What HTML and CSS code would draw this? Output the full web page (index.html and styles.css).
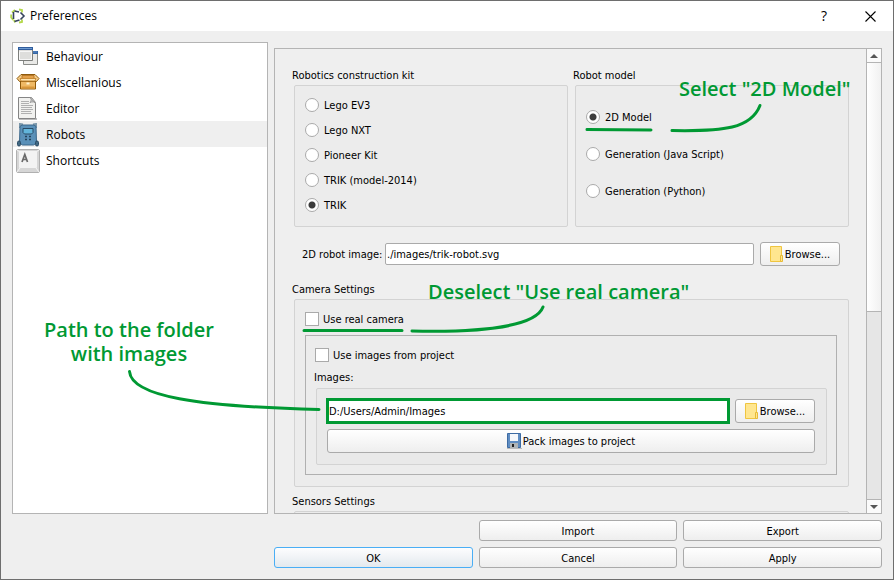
FILE: index.html
```html
<!DOCTYPE html>
<html lang="en">
<head>
<meta charset="utf-8">
<title>Preferences</title>
<link rel="stylesheet" href="styles.css">
</head>
<body>
<div class="window">
  <header class="titlebar">
    <svg class="app-icon" width="16" height="16" viewBox="0 0 16 16" fill="none">
      <path d="M2 4.500 5 2M9 1.500l3 .5v2.500M1.200 6.500v3l2 2.500M5 14.500l-1-2.500M12 11.500V14l-3 .5" stroke="#b4d84a" stroke-width="1.800"/>
      <path d="M3.500 11V4M4.500 3 9 4M10.500 4.500 14 8l-3.500 3.500M9.500 12l-5 1.500" stroke="#36435f" stroke-width="1.600"/>
    </svg>
    <h1>Preferences</h1>
    <button class="caption" aria-label="Help">?</button>
    <button class="caption" aria-label="Close"><svg width="11" height="11" viewBox="0 0 11 11" stroke="#000" stroke-width="1.100"><path d="M.5.5l10 10M10.500.5l-10 10"/></svg></button>
  </header>

  <main class="content">
    <nav class="pages">
      <button class="page">
        <svg width="24" height="24" viewBox="0 0 24 24">
          <path d="M7.500 6.500h14v13h-14z" fill="#e9e9e7" stroke="#8b8d8a"/><path d="M7 6h15v3H7z" fill="#3465a4"/><path d="M8 7h13" stroke="#5f8cc6"/>
          <path d="M2.500 3.500h14v12h-14z" fill="#dededc" stroke="#7d7f7c"/><path d="M3.500 6.500h12v8h-12z" fill="none" stroke="#f6f6f6"/><path d="M2 2h15v3H2z" fill="#2f5c9c"/><path d="M3 3.500h13" stroke="#6f9bd0"/>
        </svg>Behaviour</button>
      <button class="page">
        <svg width="24" height="24" viewBox="0 0 24 24" stroke="#8f5a0c" stroke-linejoin="round">
          <path d="M4.500 9.500h15v8.500h-15z" fill="#efb965"/><path d="M5.500 16.500h13" stroke="#d8963a" stroke-width="2"/>
          <path d="M5 3.500h14l4 4-2.500 3h-17L1 7.500z" fill="#f6ce8b"/>
          <path d="M6 4.500h12v3H6z" fill="#e3a04a" stroke="#b97b2b"/><path d="M4 7.500h16l-1 2.500H5z" fill="#ffe3ac" stroke="#c88a35"/><path d="M10.500 12.500h3" stroke="#fff3cf" stroke-width="2"/>
        </svg>Miscellanious</button>
      <button class="page">
        <svg width="24" height="24" viewBox="0 0 24 24">
          <path d="M3 22h18" stroke="#bbb" stroke-width="2"/><path d="M2.500.500h13l4 5v16h-17z" fill="#f1f1ef" stroke="#858585" stroke-linejoin="round"/>
          <path d="M14 .500c2 1 1 4 0 5 2-1 5-1 5.500 1z" fill="#ccc" stroke="#999"/>
          <path d="M5 4.500h8M5 6.500h8M5 8.500h12M5 10.500h11M5 12.500h12M5 14.500h10M5 16.500h11" stroke="#b0b0b0"/>
        </svg>Editor</button>
      <button class="page current">
        <svg width="24" height="24" viewBox="0 0 24 24" stroke="#294a65">
          <path d="M4 5V1l3 .500M20 5V1l-3 .500" fill="none" stroke="#7b97aa" stroke-width="2"/>
          <path d="M4 3.500 6 2h12l2 1.500.5 16.500-3 2h-11l-3-2z" fill="#5a90b8" stroke="#3a668a"/><path d="M7 5.500h10v4L15.500 11h-7L7 9.500z" fill="#62b4da"/>
          <path d="M9 13.500h2M13 13.500h2M9 16.500h2M13 16.500h2" stroke="#24435c" stroke-width="1.500"/>
          <rect x="1.500" y="18" width="3" height="5" rx="1.500" fill="#426983"/><rect x="19.500" y="18" width="3" height="5" rx="1.500" fill="#426983"/>
        </svg>Robots</button>
      <button class="page">
        <svg width="24" height="24" viewBox="0 0 24 24">
          <rect x=".5" y=".5" width="23" height="23" rx="1.500" fill="#d6d6d6" stroke="#b0b0b0"/><path d="M1 1l3 2M23 1l-3 2M1 23l3-4M23 23l-3-4" stroke="#f5f5f5"/><rect x="3" y="2" width="18" height="17" rx="1" fill="#f3f3f3"/>
          <path d="M6 13 8.800 5.500 11.500 13M7 10.500h3.500" fill="none" stroke="#6a6a6a" stroke-width="1.700"/>
        </svg>Shortcuts</button>
    </nav>

    <section class="panel">
      <div class="settings">
        <div class="kits">
          <div class="group" role="radiogroup" aria-labelledby="kit-title">
            <h2 id="kit-title">Robotics construction kit</h2>
            <div class="box options">
              <label><input type="radio" name="kit">Lego EV3</label>
              <label><input type="radio" name="kit">Lego NXT</label>
              <label><input type="radio" name="kit">Pioneer Kit</label>
              <label><input type="radio" name="kit">TRIK (model-2014)</label>
              <label><input type="radio" name="kit" checked>TRIK</label>
            </div>
          </div>
          <div class="group" role="radiogroup" aria-labelledby="model-title">
            <h2 id="model-title">Robot model</h2>
            <div class="box options spread">
              <label><input type="radio" name="model" checked>2D Model</label>
              <label><input type="radio" name="model">Generation (Java Script)</label>
              <label><input type="radio" name="model">Generation (Python)</label>
            </div>
          </div>
        </div>

        <div class="image-row">
          <label for="robot-image">2D robot image:</label>
          <input class="field" id="robot-image" type="text" value="./images/trik-robot.svg">
          <button class="button tall browse"><svg width="14" height="17" viewBox="0 0 14 17"><path d="M.5.500h11v15H.5z" fill="#ffe68f" stroke="#efc540"/><path d="M10.500 9.500h2v6h-2z" fill="#ffe68f" stroke="#e8bb36"/></svg>Browse...</button>
        </div>

        <div class="group">
          <h2>Camera Settings</h2>
          <div class="box camera">
            <label class="check"><input type="checkbox">Use real camera</label>
            <div class="frame">
              <label class="check"><input type="checkbox">Use images from project</label>
              <label class="images-title" for="images-path">Images:</label>
              <div class="box images">
                <div class="path-row">
                  <input class="field marked" id="images-path" type="text" value="D:/Users/Admin/Images">
                  <button class="button tall browse"><svg width="14" height="17" viewBox="0 0 14 17"><path d="M.5.500h11v15H.5z" fill="#ffe68f" stroke="#efc540"/><path d="M10.500 9.500h2v6h-2z" fill="#ffe68f" stroke="#e8bb36"/></svg>Browse...</button>
                </div>
                <button class="button tall"><svg width="15" height="16" viewBox="0 0 15 16"><path d="M.5.500h13v14H.5z" fill="#5f8dc2" stroke="#3d6ba3"/><path d="M3 1h8v7H3z" fill="#f5f8fb"/><path d="M3 10h8v5H3z" fill="#aeb4b7"/><path d="M5 11h2v3H5z" fill="#222"/><path d="M0 15.500h15" stroke="#bbb"/></svg>Pack images to project</button>
              </div>
            </div>
          </div>
        </div>

        <div class="group">
          <h2>Sensors Settings</h2>
          <div class="box sensors"></div>
        </div>
      </div>
      <div class="scrollbar" aria-hidden="true">
        <span class="arrow"><svg width="8" height="4" viewBox="0 0 8 4"><path d="M4 0l4 4H0z" fill="#555"/></svg></span>
        <span class="track"><span class="thumb"></span></span>
        <span class="arrow down"><svg width="8" height="4" viewBox="0 0 8 4"><path d="M0 0h8L4 4z" fill="#555"/></svg></span>
      </div>
    </section>
  </main>

  <footer class="actions">
    <button class="button import">Import</button>
    <button class="button">Export</button>
    <button class="button default">OK</button>
    <button class="button">Cancel</button>
    <button class="button">Apply</button>
  </footer>

  <svg class="marks" width="894" height="580" viewBox="0 0 894 580" fill="none" stroke="#009933" stroke-width="3" stroke-linecap="round">
    <path d="M587 129.500l64 .5M672 130.500c52 1 79-2 88-25"/>
    <path d="M304 330.500h98M412 331c86 2 125-8 131-24"/>
    <path d="M129.500 371.500c2 25 68 35 189.500 38"/>
  </svg>
  <p class="note note-model">Select "2D Model"</p>
  <p class="note note-camera">Deselect "Use real camera"</p>
  <p class="note note-path">Path to the folder<br>with images</p>
</div>
</body>
</html>
```
FILE: styles.css
```css
* { box-sizing: border-box; }
body { margin: 0; }
button, input { font: inherit; color: inherit; }
h1, h2, p { margin: 0; font-weight: 400; }

.window {
  position: relative;
  display: flex;
  flex-direction: column;
  height: 100vh;
  border: 1px solid #6e6e6e;
  background: #efefef;
  color: #000;
  font: 11px/16px "DejaVu Sans Condensed", "Noto Sans", sans-serif;
  overflow: hidden;
}

.titlebar {
  display: flex;
  align-items: center;
  height: 30px;
  padding-left: 9px;
  background: #fff;
  font-family: "Open Sans", sans-serif;
}
.titlebar h1 { flex: 1; padding-left: 4px; font-size: 12px; }
.caption {
  width: 46px;
  height: 30px;
  padding: 0;
  border: 0;
  background: none;
  font-size: 14px;
}
.caption svg { display: block; margin: auto; }

.content {
  display: grid;
  grid-template-columns: 256px 1fr;
  gap: 6px;
  flex: 1;
  min-height: 0;
  padding: 11px 11px 0;
}
.pages {
  border: 1px solid #b4b4b4;
  background: #fff;
}
.page {
  display: flex;
  align-items: center;
  gap: 6px;
  width: 100%;
  height: 26px;
  padding: 2px 3px 0;
  border: 0;
  background: none;
  font: 12px/16px "Open Sans", sans-serif;
}
.current { background: #efefef; }

.panel {
  display: flex;
  min-height: 0;
  margin-top: 6px;
  border: 1px solid #b4b4b4;
}
.settings {
  flex: 1;
  padding: 19px 17px 0;
  overflow: hidden;
}
.kits {
  display: grid;
  grid-template-columns: 1fr 1fr;
  gap: 5px;
}
.group { display: flex; flex-direction: column; }
.group h2 { margin-bottom: 1px; font-size: 11px; }
.box {
  margin-left: 2px;
  border: 1px solid #d3d3d3;
  border-radius: 2px;
  background: #ececec;
}
.options {
  display: flex;
  flex-direction: column;
  gap: 11px;
  height: 142px;
  padding: 12px 10px;
}
.spread { gap: 23px; padding-top: 24px; }
.options label, .check {
  display: flex;
  align-items: flex-start;
  gap: 5px;
  height: 14px;
}
.check { gap: 4px; }
input[type="radio"], input[type="checkbox"] {
  appearance: none;
  width: 14px;
  height: 14px;
  margin: 0;
  border: 1px solid #aaa;
  background: #fff;
}
input[type="radio"] { border-radius: 50%; }
input[type="radio"]:checked { background: radial-gradient(circle, #3c3c3c 3px, #fff 4px); }

.image-row {
  display: flex;
  align-items: center;
  gap: 6px;
  margin: 15px 9px 16px 10px;
}
.image-row label { width: 77px; padding-top: 2px; white-space: nowrap; }
.field {
  flex: 1;
  min-width: 0;
  height: 22px;
  padding: 1px 1px 0;
  border: 1px solid #aaa;
  border-radius: 2px;
  background: #fff;
}
.button {
  display: flex;
  align-items: center;
  justify-content: center;
  gap: 1px;
  height: 21px;
  padding: 2px 0 0;
  border: 1px solid #aaa;
  border-radius: 3px;
  background: linear-gradient(#fff, #eee);
}
.button svg { margin-bottom: 2px; }
.tall { height: 24px; }
.browse { width: 80px; }

.camera { padding: 12px 11px 11px 10px; margin-bottom: 7px; }
.frame {
  margin-top: 9px;
  padding: 12px 9px 9px 8px;
  border: 1px solid #b0b0b0;
}
.frame .check { margin-left: 1px; }
.images-title { display: block; margin: 8px 0 2px; }
.images {
  display: flex;
  flex-direction: column;
  gap: 6px;
  padding: 10px 11px 11px 10px;
  background: #e9e9e9;
}
.path-row { display: flex; align-items: center; gap: 6px; }
.marked { height: 24px; outline: 3px solid #009933; outline-offset: -2px; border-color: #093; border-radius: 0; }
.sensors { height: 100px; }

.scrollbar {
  display: flex;
  flex-direction: column;
  width: 15px;
  border-left: 1px solid #b4b4b4;
}
.arrow {
  display: grid;
  place-items: center;
  height: 14px;
  border-bottom: 1px solid #b4b4b4;
  background: #fafafa;
}
.down { border-top: 1px solid #b4b4b4; border-bottom: 0; }
.track { flex: 1; background: #e6e6e6; }
.thumb {
  display: block;
  height: 57%;
  border-bottom: 1px solid #b4b4b4;
  background: linear-gradient(90deg, #fff, #f1f1f1);
}

.actions {
  display: grid;
  grid-template-columns: repeat(3, 1fr);
  gap: 6px;
  padding: 6px 11px 11px 273px;
}
.import { grid-column: 2; }
.default { border-color: #4aaef5; background: linear-gradient(#fdfdfe, #e3e9ee); }

.marks { position: absolute; top: -1px; left: -1px; pointer-events: none; }
.note {
  position: absolute;
  color: #093;
  font: 600 20px/24px "Open Sans", sans-serif;
  text-align: center;
  white-space: nowrap;
}
.note-model { top: 76px; left: 678px; }
.note-camera { top: 279px; left: 427px; }
.note-path { top: 317px; left: 43px; }
```
